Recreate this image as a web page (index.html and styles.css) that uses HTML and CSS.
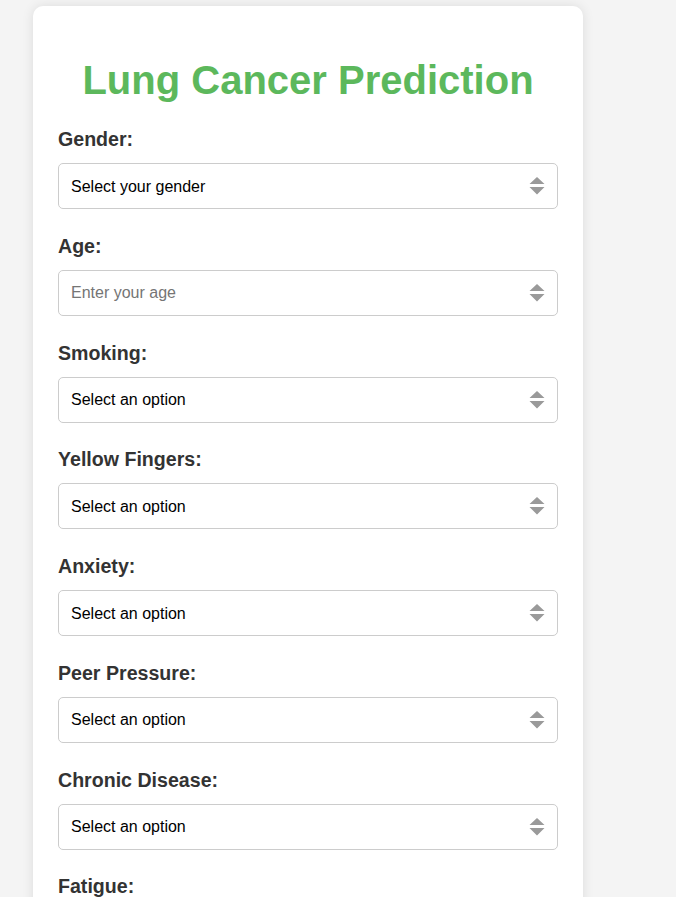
FILE: index.html
```html
<!DOCTYPE html>
<html lang="en">
<head>
<meta charset="utf-8">
<title>Lung Cancer Prediction</title>
<link rel="stylesheet" href="styles.css">
</head>
<body>
<div class="page">
  <form class="card">
    <h1 class="title">Lung Cancer Prediction</h1>

    <div class="field">
      <label class="label" for="gender">Gender:</label>
      <div class="control">
        <select id="gender" class="input"><option>Select your gender</option><option>Male</option><option>Female</option></select>
        <svg class="spin" width="16" height="20" viewBox="0 0 16 20"><path d="M8 1 L15.5 8 H0.5 Z M0.5 11 H15.5 L8 18.5 Z" fill="#9a9a9a"/></svg>
      </div>
    </div>

    <div class="field">
      <label class="label" for="age">Age:</label>
      <div class="control">
        <input id="age" class="input" type="text" placeholder="Enter your age">
        <svg class="spin" width="16" height="20" viewBox="0 0 16 20"><path d="M8 1 L15.5 8 H0.5 Z M0.5 11 H15.5 L8 18.5 Z" fill="#9a9a9a"/></svg>
      </div>
    </div>

    <div class="field">
      <label class="label" for="smoking">Smoking:</label>
      <div class="control">
        <select id="smoking" class="input"><option>Select an option</option><option>Yes</option><option>No</option></select>
        <svg class="spin" width="16" height="20" viewBox="0 0 16 20"><path d="M8 1 L15.5 8 H0.5 Z M0.5 11 H15.5 L8 18.5 Z" fill="#9a9a9a"/></svg>
      </div>
    </div>

    <div class="field">
      <label class="label" for="yellow">Yellow Fingers:</label>
      <div class="control">
        <select id="yellow" class="input"><option>Select an option</option><option>Yes</option><option>No</option></select>
        <svg class="spin" width="16" height="20" viewBox="0 0 16 20"><path d="M8 1 L15.5 8 H0.5 Z M0.5 11 H15.5 L8 18.5 Z" fill="#9a9a9a"/></svg>
      </div>
    </div>

    <div class="field">
      <label class="label" for="anxiety">Anxiety:</label>
      <div class="control">
        <select id="anxiety" class="input"><option>Select an option</option><option>Yes</option><option>No</option></select>
        <svg class="spin" width="16" height="20" viewBox="0 0 16 20"><path d="M8 1 L15.5 8 H0.5 Z M0.5 11 H15.5 L8 18.5 Z" fill="#9a9a9a"/></svg>
      </div>
    </div>

    <div class="field">
      <label class="label" for="peer">Peer Pressure:</label>
      <div class="control">
        <select id="peer" class="input"><option>Select an option</option><option>Yes</option><option>No</option></select>
        <svg class="spin" width="16" height="20" viewBox="0 0 16 20"><path d="M8 1 L15.5 8 H0.5 Z M0.5 11 H15.5 L8 18.5 Z" fill="#9a9a9a"/></svg>
      </div>
    </div>

    <div class="field">
      <label class="label" for="chronic">Chronic Disease:</label>
      <div class="control">
        <select id="chronic" class="input"><option>Select an option</option><option>Yes</option><option>No</option></select>
        <svg class="spin" width="16" height="20" viewBox="0 0 16 20"><path d="M8 1 L15.5 8 H0.5 Z M0.5 11 H15.5 L8 18.5 Z" fill="#9a9a9a"/></svg>
      </div>
    </div>

    <div class="field">
      <label class="label" for="fatigue">Fatigue:</label>
      <div class="control">
        <select id="fatigue" class="input"><option>Select an option</option><option>Yes</option><option>No</option></select>
        <svg class="spin" width="16" height="20" viewBox="0 0 16 20"><path d="M8 1 L15.5 8 H0.5 Z M0.5 11 H15.5 L8 18.5 Z" fill="#9a9a9a"/></svg>
      </div>
    </div>

    <div class="field">
      <label class="label" for="allergy">Allergy:</label>
      <div class="control">
        <select id="allergy" class="input"><option>Select an option</option><option>Yes</option><option>No</option></select>
        <svg class="spin" width="16" height="20" viewBox="0 0 16 20"><path d="M8 1 L15.5 8 H0.5 Z M0.5 11 H15.5 L8 18.5 Z" fill="#9a9a9a"/></svg>
      </div>
    </div>

    <button class="submit" type="button">Predict</button>
  </form>
</div>
</body>
</html>
```

FILE: styles.css
```css
html, body {
  margin: 0;
  padding: 0;
  background: #f4f4f4;
  font-family: "Liberation Sans", Arial, sans-serif;
}

.page {
  padding: 6px 0 0 33px;
}

.card {
  width: 550px;
  box-sizing: border-box;
  background: #ffffff;
  border-radius: 10px;
  box-shadow: 0 0 12px rgba(0, 0, 0, 0.1);
  padding: 52px 25px 25px;
  display: flex;
  flex-direction: column;
}

.title {
  margin: 0 0 23px;
  text-align: center;
  color: #5cb85c;
  font-size: 40px;
  line-height: 45px;
  font-weight: bold;
}

.field {
  display: flex;
  flex-direction: column;
  margin-bottom: 23.75px;
}

.label {
  display: block;
  font-size: 19.6px;
  line-height: 23px;
  padding-top: 2px;
  font-weight: bold;
  color: #333333;
  margin-bottom: 12px;
}

.control {
  position: relative;
}

.input {
  display: block;
  width: 100%;
  height: 46px;
  box-sizing: border-box;
  border: 1px solid #cccccc;
  border-radius: 5px;
  padding: 0 40px 0 12px;
  font-family: "Liberation Sans", Arial, sans-serif;
  font-size: 16px;
  color: #000000;
  background: #ffffff;
  -webkit-appearance: none;
  appearance: none;
  outline: none;
}

.input::placeholder {
  color: #757575;
}

.spin {
  position: absolute;
  right: 13px;
  top: 13px;
  pointer-events: none;
}

.submit {
  margin-top: 10px;
  height: 46px;
  border: none;
  border-radius: 5px;
  background: #5cb85c;
  color: #ffffff;
  font-size: 18px;
  font-weight: bold;
  font-family: "Liberation Sans", Arial, sans-serif;
}
```
